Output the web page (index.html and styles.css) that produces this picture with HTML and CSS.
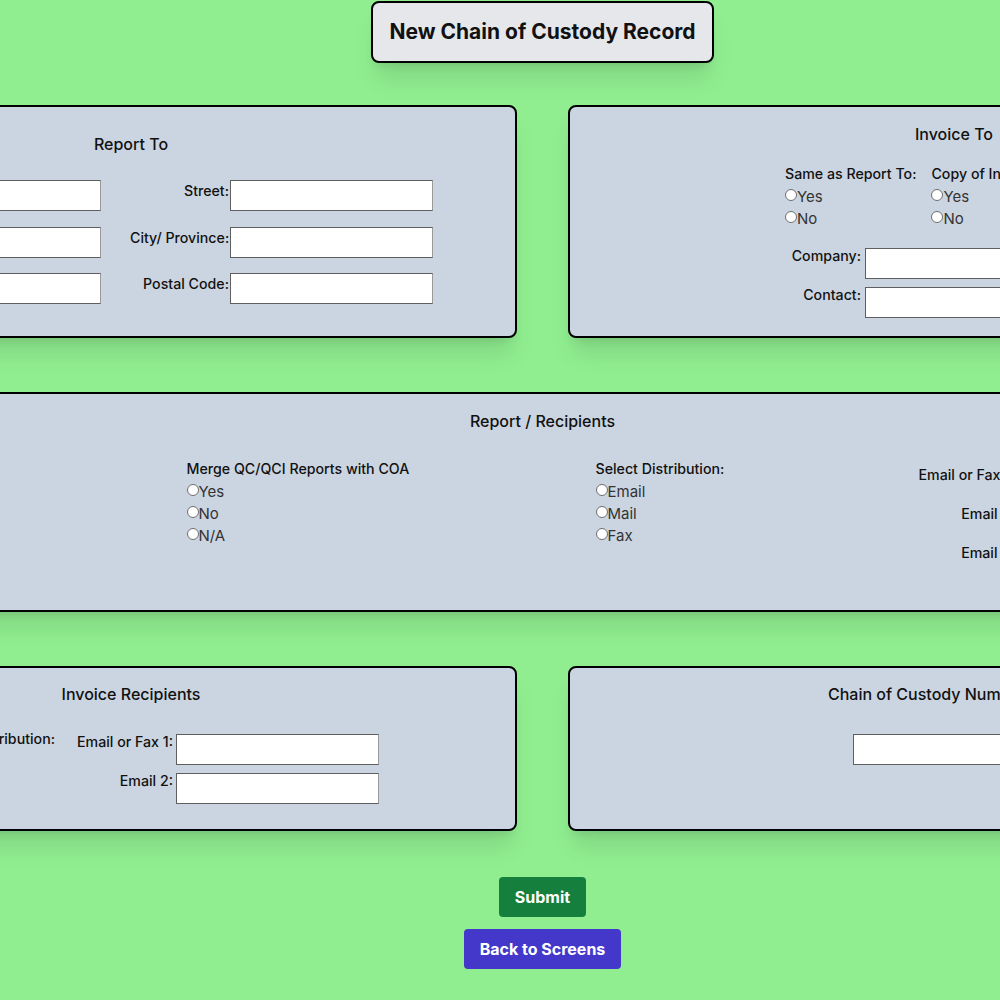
FILE: index.html
```html
<!DOCTYPE html>
<html lang="en">
<head>
<meta charset="utf-8">
<title>New Chain of Custody Record</title>
<link rel="stylesheet" href="styles.css">
</head>
<body>
<div class="page">
  <h1 class="title">New Chain of Custody Record</h1>

  <div class="row">
    <section class="card card-report">
      <h2 class="card-title">Report To</h2>
      <div class="report-fields">
        <div class="field-grid fg-a">
          <label class="lbl">Company:</label><input class="txt" type="text">
          <label class="lbl">Contact:</label><input class="txt" type="text">
          <label class="lbl">Phone:</label><input class="txt" type="text">
        </div>
        <div class="field-grid fg-b">
          <label class="lbl">Street:</label><input class="txt" type="text">
          <label class="lbl">City/ Province:</label><input class="txt" type="text">
          <label class="lbl">Postal Code:</label><input class="txt" type="text">
        </div>
      </div>
    </section>

    <section class="card card-invoice">
      <h2 class="card-title">Invoice To</h2>
      <div class="invoice-body">
        <div class="radio-row">
          <div class="radio-group">
            <span class="group-label">Same as Report To:</span>
            <label class="radio"><input type="radio" name="same">Yes</label>
            <label class="radio"><input type="radio" name="same">No</label>
          </div>
          <div class="radio-group">
            <span class="group-label">Copy of Invoice:</span>
            <label class="radio"><input type="radio" name="copy">Yes</label>
            <label class="radio"><input type="radio" name="copy">No</label>
          </div>
        </div>
        <div class="field-grid fg-inv">
          <label class="lbl">Company:</label><input class="txt" type="text">
          <label class="lbl">Contact:</label><input class="txt" type="text">
        </div>
      </div>
    </section>
  </div>

  <section class="card card-wide">
    <h2 class="card-title title-wide">Report / Recipients</h2>
    <div class="wide-body">
      <div class="radio-group">
        <span class="group-label">Report Format:</span>
        <label class="radio"><input type="radio" name="fmt">PDF</label>
        <label class="radio"><input type="radio" name="fmt">Excel</label>
        <label class="radio"><input type="radio" name="fmt">Both</label>
      </div>
      <div class="radio-group">
        <span class="group-label">Merge QC/QCI Reports with COA</span>
        <label class="radio"><input type="radio" name="merge">Yes</label>
        <label class="radio"><input type="radio" name="merge">No</label>
        <label class="radio"><input type="radio" name="merge">N/A</label>
      </div>
      <div class="radio-group">
        <span class="group-label">Select Distribution:</span>
        <label class="radio"><input type="radio" name="dist">Email</label>
        <label class="radio"><input type="radio" name="dist">Mail</label>
        <label class="radio"><input type="radio" name="dist">Fax</label>
      </div>
      <div class="field-grid fg-mail fg-wide">
        <label class="lbl">Email or Fax 1:</label><input class="txt" type="text">
        <label class="lbl">Email 2:</label><input class="txt" type="text">
        <label class="lbl">Email 3:</label><input class="txt" type="text">
      </div>
    </div>
  </section>

  <div class="row row-bottom">
    <section class="card card-invrec">
      <h2 class="card-title">Invoice Recipients</h2>
      <div class="invrec-body">
        <div class="radio-group invrec-dist">
          <span class="group-label">Select Distribution:</span>
          <label class="radio"><input type="radio" name="idist">Email</label>
          <label class="radio"><input type="radio" name="idist">Mail</label>
          <label class="radio"><input type="radio" name="idist">Fax</label>
        </div>
        <div class="field-grid fg-mail fg-invrec">
          <label class="lbl">Email or Fax 1:</label><input class="txt" type="text">
          <label class="lbl">Email 2:</label><input class="txt" type="text">
        </div>
      </div>
    </section>

    <section class="card card-coc">
      <h2 class="card-title coc-title">Chain of Custody Number</h2>
      <input class="txt coc-input" type="text">
    </section>
  </div>

  <div class="actions">
    <button class="btn btn-submit" type="button">Submit</button>
    <button class="btn btn-back" type="button">Back to Screens</button>
  </div>
</div>
</body>
</html>
```

FILE: styles.css
```css
html {
  overflow: hidden;
}

body {
  margin: 0;
  background: #90ee90;
  font-family: Inter, "Noto Sans", sans-serif;
  color: #111;
}

.page {
  width: 1085px;
  display: flex;
  flex-direction: column;
  align-items: center;
  padding-top: 1px;
}

.title {
  margin: 0 0 42px;
  padding: 15px 16px;
  border: 2px solid #000;
  border-radius: 8px;
  background: #e5e7eb;
  font-size: 21px;
  font-weight: 700;
  line-height: 28px;
  color: #111;
  white-space: nowrap;
  box-shadow: 0 20px 25px -5px rgba(0, 0, 0, 0.1), 0 8px 10px -6px rgba(0, 0, 0, 0.1);
}

.row {
  display: grid;
  grid-template-columns: 772px 772px;
  column-gap: 51px;
  flex-shrink: 0;
}

.card {
  box-sizing: border-box;
  background: #cbd5e1;
  border: 2px solid #000;
  border-radius: 8px;
  padding: 15px 20px;
  display: flex;
  flex-direction: column;
  align-items: center;
  box-shadow: 0 20px 25px -5px rgba(0, 0, 0, 0.1), 0 8px 10px -6px rgba(0, 0, 0, 0.1);
}

.card-title {
  margin: 0;
  font-size: 16px;
  font-weight: 500;
  line-height: 24px;
  color: #111;
  white-space: nowrap;
}

/* inputs */
.txt {
  box-sizing: border-box;
  width: 203px;
  height: 31px;
  margin: 0;
  padding: 0 4px;
  background: #fff;
  border: 1px solid #5f5f5f;
  border-right-color: #9a9a9a;
  border-radius: 0;
  font-family: inherit;
  font-size: 14px;
}

.field-grid {
  display: grid;
  align-items: start;
}

.lbl {
  font-size: 14.2px;
  font-weight: 500;
  text-align: right;
  line-height: 16px;
  color: #111;
  white-space: nowrap;
}

/* Report To */
.card-report {
  padding-top: 25px;
}

.report-fields {
  display: flex;
  gap: 29px;
  margin-top: 24px;
}

.fg-a {
  grid-template-columns: 68px 203px;
  column-gap: 1px;
  row-gap: 15.5px;
}

.fg-b {
  grid-template-columns: 99px 203px;
  column-gap: 1px;
  row-gap: 15.5px;
}

.fg-a .lbl,
.fg-b .lbl {
  line-height: 20px;
  padding-top: 1px;
}

/* radios */
.radio-group {
  display: flex;
  flex-direction: column;
  align-items: flex-start;
}

.group-label {
  font-size: 14.2px;
  font-weight: 500;
  line-height: 22px;
  color: #111;
  white-space: nowrap;
}

.radio {
  display: flex;
  align-items: center;
  height: 22px;
  font-size: 15px;
  color: #333;
}

.radio input {
  appearance: none;
  -webkit-appearance: none;
  box-sizing: border-box;
  width: 12px;
  height: 12px;
  margin: 0 0 2px 0;
  border: 1px solid #6e6e6e;
  border-radius: 50%;
  background: #fff;
}

/* Invoice To */
.card-invoice {
  padding-bottom: 18px;
}

.invoice-body {
  width: 338px;
  display: flex;
  flex-direction: column;
}

.radio-row {
  display: flex;
  gap: 15px;
  margin-top: 17px;
}

.fg-inv {
  margin-top: 19px;
  grid-template-columns: 76px 250px;
  column-gap: 4px;
  row-gap: 8px;
}

.fg-inv .txt {
  width: 250px;
}

/* Report / Recipients */
.card-wide {
  width: 1595px;
  flex-shrink: 0;
  margin-top: 54px;
  padding-bottom: 34px;
}

.title-wide {
  margin-bottom: 25px;
}

.wide-body {
  display: grid;
  grid-template-columns: 320px 409px 323px 300px;
  align-items: start;
}

.fg-mail {
  grid-template-columns: 96px 203px;
  column-gap: 3px;
  row-gap: 8px;
}

.fg-wide {
  margin-top: 9px;
}

/* bottom row */
.row-bottom {
  margin-top: 54px;
}

.card-invrec {
  padding-top: 14px;
  padding-bottom: 13px;
}

.invrec-body {
  display: grid;
  grid-template-columns: 172px 302px;
  column-gap: 22px;
  margin-top: 22px;
  align-items: start;
}

.invrec-dist {
  justify-self: end;
}

.fg-invrec {
  margin-top: 6px;
}

.card-coc {
  padding-top: 14px;
}

.coc-title {
  width: 252px;
  text-align: left;
}

.coc-input {
  margin-top: 28px;
}

/* buttons */
.actions {
  margin-top: 46px;
  display: flex;
  flex-direction: column;
  align-items: center;
  gap: 12px;
}

.btn {
  border: none;
  border-radius: 4px;
  padding: 8px 16px;
  font-family: inherit;
  font-size: 16px;
  font-weight: 700;
  line-height: 24px;
  color: #fff;
  cursor: pointer;
}

.btn-submit {
  background: #15803d;
}

.btn-back {
  background: #4338ca;
}
```
